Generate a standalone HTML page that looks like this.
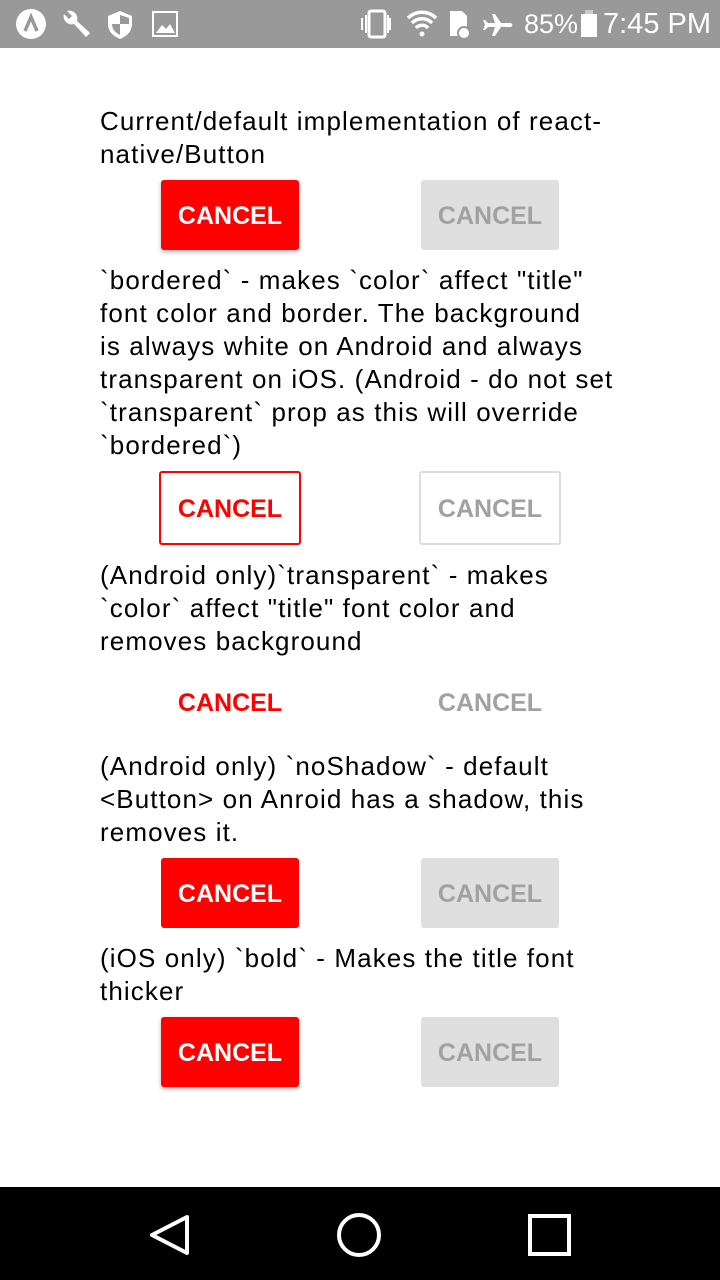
<html><head><style>
body{margin:0;width:720px;height:1280px;position:relative;background:#fff;font-family:"Liberation Sans",sans-serif;overflow:hidden}
.sb{position:absolute;top:0;left:0;width:720px;height:48px;background:#999;color:#fff}
.t{position:absolute;left:100px;font-size:26px;line-height:33px;color:#000;white-space:nowrap;letter-spacing:1.1px}
.b{position:absolute;width:138px;height:70px;border-radius:3px;display:flex;align-items:center;justify-content:center;font-weight:bold;font-size:25px;box-sizing:border-box;padding-top:2px}
.r{background:#f00;color:#fff;box-shadow:0 2px 4px rgba(0,0,0,.3)}
.g{background:#dfdfdf;color:#a1a1a1}
.nav{position:absolute;top:1187px;left:0;width:720px;height:93px;background:#000}
</style></head><body>
<div class="sb">
<svg width="720" height="48" style="position:absolute;left:0;top:0">
<circle cx="31" cy="24" r="15" fill="#fff"/><path d="M25 31 L31 17 L37 31" stroke="#999" stroke-width="3.5" fill="none"/>
<path d="M64 14 a8 8 0 0 0 10 10 l12 13 l4 -4 l-13 -12 a8 8 0 0 0 -10 -10 l5 5 l-3 3z" fill="#fff"/>
<path d="M120 11 l12 5 v8 q0 10 -12 15 q-12 -5 -12 -15 v-8z" fill="#fff"/><path d="M120 15 v9 h9 v-6 z M120 24 v11 q-8 -4 -8 -11z" fill="#999"/>
<rect x="153" y="12" width="24" height="24" fill="none" stroke="#fff" stroke-width="2"/><path d="M156 33 l6 -8 l4 4 l4 -5 l5 9z" fill="#fff"/>
<rect x="369" y="11" width="16" height="26" rx="2" fill="none" stroke="#fff" stroke-width="3"/><path d="M362 18v12M390 18v12M366 15v18M388 15v18" stroke="#fff" stroke-width="2"/>
<path d="M408 18 a20 20 0 0 1 28 0 M412 23 a14 14 0 0 1 20 0 M416 28 a8 8 0 0 1 12 0" stroke="#fff" stroke-width="3.5" fill="none"/><circle cx="422" cy="34" r="2.5" fill="#fff"/>
<path d="M450 11 h12 l5 5 v20 h-17z" fill="#fff"/><circle cx="464" cy="33" r="6" fill="#fff" stroke="#999" stroke-width="2"/>
<path d="M496 10 v10 l-9 6 v3 l9 -3 v7 l-3 3 v2 l5 -2 l5 2 v-2 l-3 -3 v-7 l9 3 v-3 l-9 -6 v-10 q-2 -3 -4 0z" fill="#fff" transform="rotate(90 497 24)"/>
<rect x="581" y="14" width="16" height="23" fill="#fff"/><rect x="585" y="10" width="8" height="4" fill="#ccc"/>
</svg>
<div style="position:absolute;left:524px;top:9px;font-size:27px">85%</div>
<div style="position:absolute;left:603px;top:8px;font-size:29px">7:45 PM</div>
</div>
<div class="t" style="top:105px">Current/default implementation of react-<br>native/Button</div>
<div class="b r" style="left:161px;top:180px">CANCEL</div>
<div class="b g" style="left:421px;top:180px">CANCEL</div>
<div class="t" style="top:264px">`bordered` - makes `color` affect "title"<br>font color and border. The background<br>is always white on Android and always<br>transparent on iOS. (Android - do not set<br>`transparent` prop as this will override<br>`bordered`)</div>
<div class="b" style="left:159px;top:471px;width:142px;height:74px;border:2px solid #f00;color:#f00">CANCEL</div>
<div class="b" style="left:419px;top:471px;width:142px;height:74px;border:2px solid #ddd;color:#a1a1a1">CANCEL</div>
<div class="t" style="top:559px">(Android only)`transparent` - makes<br>`color` affect "title" font color and<br>removes background</div>
<div class="b" style="left:161px;top:667px;color:#f00">CANCEL</div>
<div class="b" style="left:421px;top:667px;color:#a1a1a1">CANCEL</div>
<div class="t" style="top:750px">(Android only) `noShadow` - default<br>&lt;Button&gt; on Anroid has a shadow, this<br>removes it.</div>
<div class="b r" style="left:161px;top:858px;box-shadow:none">CANCEL</div>
<div class="b g" style="left:421px;top:858px">CANCEL</div>
<div class="t" style="top:942px">(iOS only) `bold` - Makes the title font<br>thicker</div>
<div class="b r" style="left:161px;top:1017px">CANCEL</div>
<div class="b g" style="left:421px;top:1017px">CANCEL</div>
<div class="nav"><svg width="720" height="93">
<path d="M187 30 L152 48 L187 66Z" fill="none" stroke="#fff" stroke-width="4" stroke-linejoin="round"/>
<circle cx="359" cy="48" r="20" fill="none" stroke="#fff" stroke-width="4"/>
<rect x="530" y="29" width="39" height="38" fill="none" stroke="#fff" stroke-width="4"/>
</svg></div>
</body></html>
